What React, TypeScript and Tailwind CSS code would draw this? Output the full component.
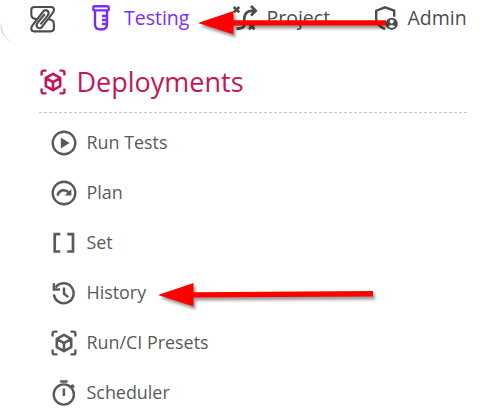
import type { ReactNode } from 'react';

function Icon({ children, className = '' }: { children: ReactNode; className?: string }) {
  return (
    <svg viewBox="0 0 28 28" width="28" height="28" fill="none" stroke="currentColor" strokeWidth="2.4" className={`shrink-0 overflow-visible ${className}`}>
      {children}
    </svg>
  );
}

function CubeScan() {
  return (
    <Icon>
      <path d="M2.6 7.5V4.6q0-2 2-2h2.9M20.5 2.6h2.9q2 0 2 2v2.9M25.4 20.5v2.9q0 2-2 2h-2.9M7.5 25.4H4.6q-2 0-2-2v-2.9" />
      <path d="m14 5.9 7.2 4v8.2L14 22.2l-7.2-4.1V9.9zM6.8 10l7.2 4.2 7.2-4.2M14 14.2v8" strokeLinejoin="round" strokeWidth="2.6" />
    </Icon>
  );
}

function Arrow({ className, shaft, width }: { className: string; shaft: string; width: number }) {
  return (
    <svg className={`absolute overflow-visible drop-shadow-[2px_3px_1.5px_rgba(0,0,0,0.4)] ${className}`} width={width} height="24" fill="#fe0000">
      <path d={`M0 12 35.5 0V9.2${shaft}L35.5 14.6V23.5Z`} />
    </svg>
  );
}

const entries: { label: string; icon: ReactNode }[] = [
  {
    label: 'Run Tests',
    icon: <Icon><circle cx="14" cy="14" r="11.3" /><path d="m10.8 8.6 8.7 5.4-8.7 5.4z" fill="currentColor" stroke="none" /></Icon>,
  },
  {
    label: 'Plan',
    icon: <Icon><circle cx="14" cy="14" r="11.3" /><path d="M7.6 16.6C9 10.6 15.2 9.6 19 14" strokeWidth="2.7" /><path d="M21.4 10v6.5h-6.6z" fill="currentColor" stroke="none" /></Icon>,
  },
  {
    label: 'Set',
    icon: <Icon><path d="M10.3 5.1H4.7v17.4h5.6M17.3 5.1H23v17.4h-5.7" strokeWidth="2.7" /></Icon>,
  },
  {
    label: 'History',
    icon: <Icon><path d="M3.9 15.5A9.9 9.9 0 1 0 5.6 8.6" strokeWidth="2.5" /><path d="M3.9 4.2v6.2h6.2M14 8.5v6.2l4.2 3.4" strokeWidth="2.5" /></Icon>,
  },
  { label: 'Run/CI Presets', icon: <CubeScan /> },
  {
    label: 'Scheduler',
    icon: <Icon><circle cx="13.8" cy="15.5" r="10.1" /><path d="M10.2 2.4h7.4M13.9 9.4V17M20.3 8.7l2-2 1.7 1.7" strokeWidth="2.5" /></Icon>,
  },
];

export default function App() {
  return (
    <div className="relative h-[415px] w-[497px] overflow-hidden bg-white font-['Open_Sans',sans-serif] text-[#4d4d4d]">
      <div className="h-[43px] overflow-hidden">
        <header className="-mt-5 h-[63px] w-[520px] rounded-bl-[18px] border-l-2 border-[#d4d4d4] pt-5 [mask-image:linear-gradient(to_bottom,transparent_42px,black_52px)] [mask-size:28px_100%] [mask-repeat:no-repeat]" />
        <nav className="-mt-[43px] flex h-9 items-center text-[19.5px]">
          <Icon className="ml-7">
            <path id="half" d="M9.3 15.2Q3.3 15 3.3 10.5V6.2Q3.3 3 6.5 3H23q3 0 3 2.8 0 1.8-1.6 3.6L14.2 22.7q-2.2 2.6-4.6.8-2.2-2 0-4.7L16.7 10" strokeWidth="2.1" strokeLinejoin="round" />
            <use href="#half" transform="rotate(180 14.6 15.2)" />
          </Icon>
          <div className="ml-[31px] flex items-center text-[#7c2df5]">
            <Icon>
              <rect x="6.3" y="2.2" width="15.4" height="4.2" rx="1.5" />
              <path d="M8 6.5v14q0 5 6 5t6-5v-14M15 12h5M15 16h5M15 20h5" />
            </Icon>
            <span className="ml-[9px] w-[66px]">Testing</span>
          </div>
          <div className="ml-[41px] flex items-center">
            <Icon>
              <path d="m2.7 3 5.6 5.4m0-5.4L2.7 8.4M18 20l5.6 5.2m0-5.2L18 25.2M5.5 24.8c11.5 0 7-6.3 7.8-11.3Q14.3 6.8 21 6.8h3.5M20 2l4.7 4.8-4.7 4.7" strokeWidth="2.7" />
            </Icon>
            <span className="ml-[7.5px] w-[65px]">Project</span>
          </div>
          <div className="ml-[40.5px] flex items-center">
            <Icon className="-ml-px">
              <path d="M14 25.2c-5-2.2-8.8-5.6-8.8-10.2V6.7L14 3.3l9.2 3.4v6" />
              <circle cx="20.7" cy="19.8" r="6.1" fill="currentColor" stroke="none" />
              <circle cx="20.7" cy="17.5" r="1.9" fill="white" stroke="none" />
              <path d="M17.2 22.6q3.5-3.4 7 0-3.5 2.6-7 0" fill="white" stroke="none" />
            </Icon>
            <span className="ml-[8.5px]">Admin</span>
          </div>
        </nav>
      </div>
      <main className="ml-[39px] w-[428px]">
        <h1 className="flex h-[70px] items-center border-b border-dashed border-[#c7c7c7] pt-[9px] text-[27px] text-[#c2185b]">
          <CubeScan />
          <span className="ml-[9.5px]">Deployments</span>
        </h1>
        <ul className="ml-[11px] mt-1">
          {entries.map(({ label, icon }) => (
            <li key={label} className="flex h-[50px] items-center text-[17.9px] text-[#5a5a5a]">
              <span className="pt-[1.5px]">{icon}</span>
              <span className="ml-[8.5px]">{label}</span>
            </li>
          ))}
        </ul>
      </main>
      <Arrow className="left-[198px] top-[11px]" width={190} shaft="H188V14.6" />
      <Arrow className="left-[158px] top-[283px]" width={216} shaft="L215 8V13.5" />
    </div>
  );
}
